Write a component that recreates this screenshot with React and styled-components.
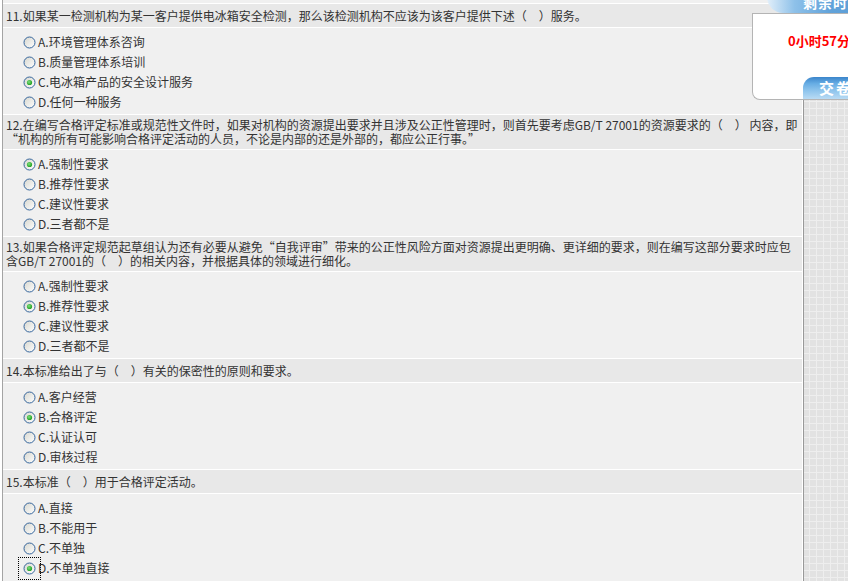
import React, { useId } from 'react'
import styled, { createGlobalStyle } from 'styled-components'

const GlobalStyle = createGlobalStyle`
  html, body {
    margin: 0;
    padding: 0;
    overflow: hidden;
    background: #fff;
  }
  body {
    font-family: "Noto Sans CJK SC", "Noto Sans", sans-serif;
    font-size: 12px;
    color: #333;
  }
`

const Page = styled.div`
  position: relative;
  display: flex;
  height: 100vh;
`

const Content = styled.div`
  width: 799px;
  margin-left: 2px;
  padding-top: 3px;
  border-left: 1px solid #a4a4a4;
  border-right: 1px solid #fff;
  background: #f0f0f0;
`

const Side = styled.div`
  flex: 1;
  border-left: 1px solid #999;
  background-color: #e2e2e2;
  background-image: linear-gradient(#eeeeee 1px, transparent 1px),
    linear-gradient(90deg, #eeeeee 1px, transparent 1px);
  background-size: 7px 7px;
  background-position: 5px 3px;
`

const QuestionHeader = styled.div`
  display: flex;
  align-items: center;
  min-height: 17px;
  padding: 3px 3px;
  border-top: 1px solid #fff;
  border-bottom: 1px solid #fff;
  background: #e8e8e8;
  line-height: 14px;
  white-space: pre;
`

const Options = styled.div`
  padding: 4px 0 2px 20px;
`

const Option = styled.label`
  display: flex;
  align-items: center;
  gap: 2px;
  height: 20px;
  line-height: 20px;
`

const RadioBox = styled.span`
  display: inline-flex;
  width: 13px;
  height: 13px;
  outline: ${(p) => (p.$focused ? '1px dotted #000' : 'none')};
  outline-offset: 4px;
`

const Panel = styled.div`
  position: absolute;
  top: 0;
  left: 752px;
  width: 140px;
`

const TabRow = styled.div`
  height: 13px;
  overflow: hidden;
`

const Tab = styled.div`
  margin: -13px 0 0 15px;
  height: 22px;
  padding: 4px 0 0 36px;
  line-height: 22px;
  border-bottom-left-radius: 16px;
  background: linear-gradient(to right, #e2effa 0%, #8ec1e9 22%, #62a3da 50%, #5598d3 100%);
  color: #fff;
  font-size: 14px;
  font-weight: bold;
  letter-spacing: 1px;
`

const PanelBody = styled.div`
  box-sizing: border-box;
  display: flex;
  flex-direction: column;
  height: 87px;
  border: 1px solid #b4b4b4;
  border-right: none;
  border-bottom-left-radius: 8px;
  background: #fff;
`

const Timer = styled.div`
  padding: 20px 0 0 35px;
  line-height: 14px;
  color: #f00;
  font-size: 13px;
  font-weight: bold;
  white-space: nowrap;
`

const SubmitButton = styled.div`
  margin: auto 0 0 50px;
  height: 22px;
  padding-left: 16px;
  line-height: 22px;
  border-top-left-radius: 11px;
  background: linear-gradient(to bottom, #3b85cb 0%, #67ade4 30%, #8cc3ec 60%, #b9dbf4 100%);
  color: #fff;
  font-size: 15px;
  font-weight: bold;
  letter-spacing: 2px;
`

const Radio = ({ checked, focused }) => {
  const id = useId()
  return (
    <RadioBox $focused={focused}>
      <svg width="13" height="13" viewBox="0 0 13 13">
        <defs>
          <linearGradient id={id} x1="0" y1="0" x2="1" y2="1">
            <stop offset="0" stopColor="#d6d6ce" />
            <stop offset="1" stopColor="#ffffff" />
          </linearGradient>
          <radialGradient id={id + 'd'} cx="0.4" cy="0.4" r="0.6">
            <stop offset="0" stopColor="#7fe07f" />
            <stop offset="1" stopColor="#21a121" />
          </radialGradient>
        </defs>
        <circle cx="6.5" cy="6.5" r="5.5" fill={`url(#${id})`} stroke="#35659c" strokeWidth="1" />
        {checked && <circle cx="6.5" cy="6.5" r="2.6" fill={`url(#${id}d)`} />}
      </svg>
    </RadioBox>
  )
}

const questions = [
  {
    lines: ['11.如果某一检测机构为某一客户提供电冰箱安全检测，那么该检测机构不应该为该客户提供下述（\u3000）服务。'],
    options: ['环境管理体系咨询', '质量管理体系培训', '电冰箱产品的安全设计服务', '任何一种服务'],
    answer: 2,
  },
  {
    lines: [
      '12.在编写合格评定标准或规范性文件时，如果对机构的资源提出要求并且涉及公正性管理时，则首先要考虑GB/T 27001的资源要求的（\u3000） 内容，即',
      '“机构的所有可能影响合格评定活动的人员，不论是内部的还是外部的，都应公正行事。”',
    ],
    options: ['强制性要求', '推荐性要求', '建议性要求', '三者都不是'],
    answer: 0,
  },
  {
    lines: [
      '13.如果合格评定规范起草组认为还有必要从避免“自我评审”带来的公正性风险方面对资源提出更明确、更详细的要求，则在编写这部分要求时应包',
      '含GB/T 27001的（\u3000）的相关内容，并根据具体的领域进行细化。',
    ],
    options: ['强制性要求', '推荐性要求', '建议性要求', '三者都不是'],
    answer: 1,
  },
  {
    lines: ['14.本标准给出了与（\u3000）有关的保密性的原则和要求。'],
    options: ['客户经营', '合格评定', '认证认可', '审核过程'],
    answer: 1,
  },
  {
    lines: ['15.本标准（\u3000）用于合格评定活动。'],
    options: ['直接', '不能用于', '不单独', '不单独直接'],
    answer: 3,
    focused: true,
  },
]

const letters = ['A', 'B', 'C', 'D']

const App = () => {
  return (
    <Page>
      <GlobalStyle />
      <Content>
        {questions.map((q, qi) => (
          <div key={qi}>
            <QuestionHeader>
              <span>
                {q.lines.map((l, li) => (
                  <React.Fragment key={li}>
                    {li > 0 && <br />}
                    {l}
                  </React.Fragment>
                ))}
              </span>
            </QuestionHeader>
            <Options>
              {q.options.map((o, oi) => (
                <Option key={oi}>
                  <Radio checked={q.answer === oi} focused={q.focused && q.answer === oi} />
                  {letters[oi]}.{o}
                </Option>
              ))}
            </Options>
          </div>
        ))}
      </Content>
      <Side />
      <Panel>
        <TabRow>
          <Tab>剩余时间</Tab>
        </TabRow>
        <PanelBody>
          <Timer>0小时57分14秒</Timer>
          <SubmitButton>交卷</SubmitButton>
        </PanelBody>
      </Panel>
    </Page>
  )
}

export default App
